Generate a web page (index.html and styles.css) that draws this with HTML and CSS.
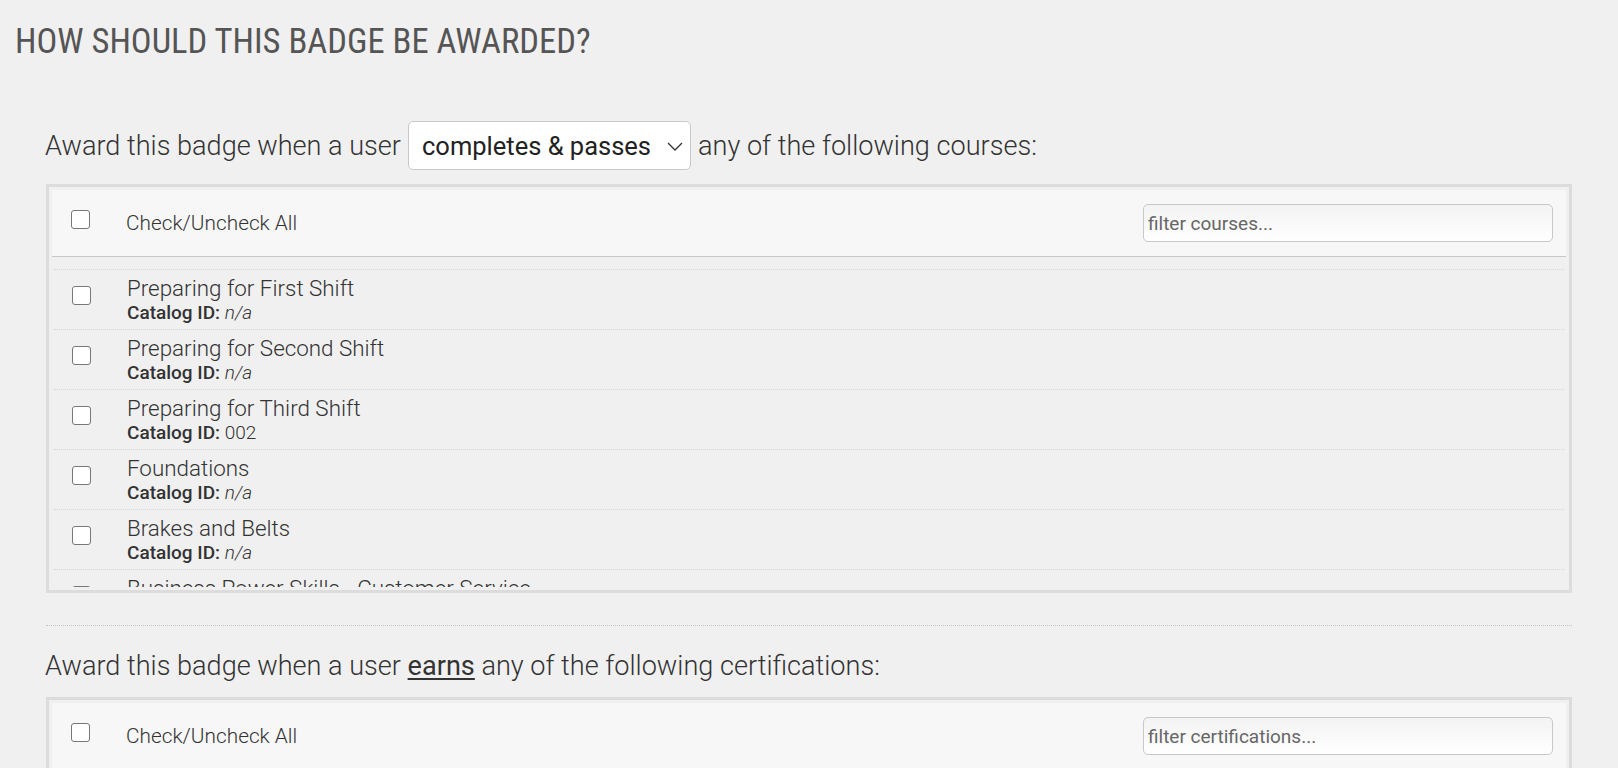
FILE: index.html
```html
<!DOCTYPE html>
<html>
<head>
  <title>Badge Award Rules</title>
  <link rel="stylesheet" href="styles.css">
</head>
<body>
  <div class="page">
    <h1>How should this badge be awarded?</h1>

    <div class="section">
      <div class="intro intro-select">
        <span>Award this badge when a user</span>
        <div class="select-wrap">
          <select class="award-select">
            <option>completes &amp; passes</option>
            <option>completes</option>
          </select>
          <svg class="chevron" width="16" height="9" viewBox="0 0 16 9"><path d="M1 1 L8 8 L15 1" fill="none" stroke="#333" stroke-width="1.3"/></svg>
        </div>
        <span>any of the following courses:</span>
      </div>

      <div class="panel">
        <div class="panel-head">
          <input type="checkbox" class="check">
          <span class="check-all">Check/Uncheck All</span>
          <input type="text" class="filter" placeholder="filter courses...">
        </div>
        <div class="list">
          <div class="row">
            <input type="checkbox" class="check">
            <div class="info">
              <div class="title">Preparing for First Shift</div>
              <div class="catalog"><b>Catalog ID:</b> <i>n/a</i></div>
            </div>
          </div>
          <div class="row">
            <input type="checkbox" class="check">
            <div class="info">
              <div class="title">Preparing for Second Shift</div>
              <div class="catalog"><b>Catalog ID:</b> <i>n/a</i></div>
            </div>
          </div>
          <div class="row">
            <input type="checkbox" class="check">
            <div class="info">
              <div class="title">Preparing for Third Shift</div>
              <div class="catalog"><b>Catalog ID:</b> 002</div>
            </div>
          </div>
          <div class="row">
            <input type="checkbox" class="check">
            <div class="info">
              <div class="title">Foundations</div>
              <div class="catalog"><b>Catalog ID:</b> <i>n/a</i></div>
            </div>
          </div>
          <div class="row">
            <input type="checkbox" class="check">
            <div class="info">
              <div class="title">Brakes and Belts</div>
              <div class="catalog"><b>Catalog ID:</b> <i>n/a</i></div>
            </div>
          </div>
          <div class="row">
            <input type="checkbox" class="check">
            <div class="info">
              <div class="title">Business Power Skills - Customer Service</div>
            </div>
          </div>
        </div>
      </div>
    </div>

    <hr class="divider">

    <div class="section">
      <div class="intro">
        <span>Award this badge when a user <u>earns</u> any of the following certifications:</span>
      </div>

      <div class="panel">
        <div class="panel-head">
          <input type="checkbox" class="check">
          <span class="check-all">Check/Uncheck All</span>
          <input type="text" class="filter" placeholder="filter certifications...">
        </div>
      </div>
    </div>
  </div>
</body>
</html>
```

FILE: styles.css
```css
body { margin: 0; background: #f0f0f0; color: #333; font-family: Roboto, "Liberation Sans", sans-serif; }
.page { padding: 0 46px 0 15px; }

h1 { margin: 20px 0 0; font-family: "Roboto Condensed", Roboto, sans-serif; font-stretch: condensed; font-weight: 400; font-size: 34.6px; line-height: 42px; text-transform: uppercase; color: #555; white-space: nowrap; }

.section { margin-left: 31px; }
.intro { display: flex; align-items: center; gap: 7px; margin-left: -1px; font-size: 27.1px; font-weight: 300; line-height: 34px; margin-bottom: 14px; }
.intro-select { margin-top: 59px; }
.intro u { font-weight: 400; text-underline-offset: 3px; }

.select-wrap { position: relative; }
.award-select { appearance: none; width: 283px; height: 49px; padding: 0 0 0 13px; border: 1px solid #c9c9c9; border-radius: 5px; background: #fff; font-family: Roboto, sans-serif; font-size: 25.5px; color: #222; }
.chevron { position: absolute; right: 8px; top: 21px; pointer-events: none; }

.panel { border: 3px solid #dcdcdc; padding: 3px; }
.panel-head { display: flex; align-items: center; box-sizing: border-box; height: 67px; background: #f7f7f7; border-bottom: 1px solid #c8c8c8; padding: 0 13px 0 19px; }
.check { appearance: none; margin: 0; width: 19px; height: 19px; border: 1.5px solid #777; border-radius: 3px; background: #fff; flex: none; }
.panel-head .check { align-self: flex-start; margin-top: 20px; }
.check-all { margin-left: 36px; font-size: 20.8px; font-weight: 300; flex: 1; }
.filter { width: 410px; height: 38px; box-sizing: border-box; border: 1px solid #c8c8c8; border-radius: 5px; background: linear-gradient(#f3f3f3, #fff); padding: 0 4px; font-family: Roboto, sans-serif; font-size: 19px; color: #333; }
.filter::placeholder { color: #666; }

.list { height: 318px; padding: 12px 2px 0; overflow: hidden; }
.row { display: flex; align-items: flex-start; border-top: 1px dotted #d6d6d6; height: 59px; }
.row .check { margin: 16px 0 0 18px; }
.info { margin-left: 36px; padding-top: 6px; }
.title { font-size: 22.4px; font-weight: 300; line-height: 24px; }
.catalog { margin-top: 2px; font-size: 19px; line-height: 22px; font-weight: 300; }
.catalog b { font-weight: 500; }

.divider { margin: 32px 0 0 31px; border: 0; border-top: 1px dotted #c4c4c4; }
.divider + .section .intro { margin-top: 23px; }
```
